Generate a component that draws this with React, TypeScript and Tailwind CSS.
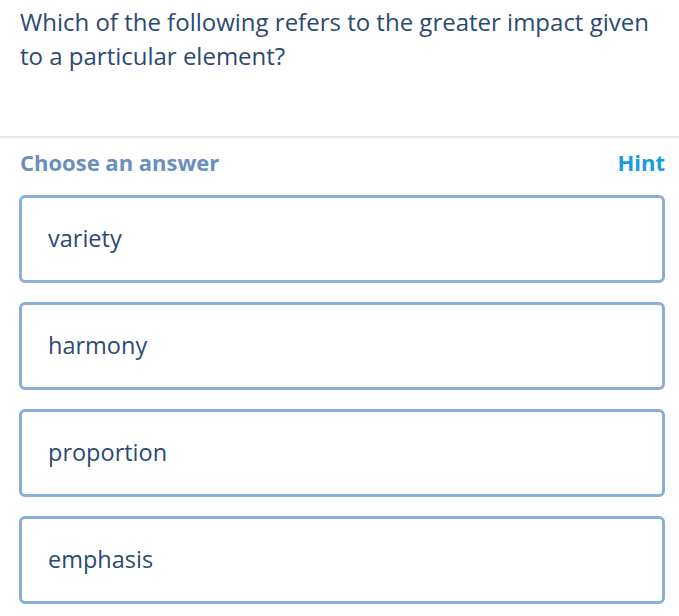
const answers = ['variety', 'harmony', 'proportion', 'emphasis']

export default function App() {
  return (
    <div className="min-h-[616px] w-[679px] bg-white [font-family:'Open_Sans',sans-serif]">
      <div className="h-[136px] pl-5 pr-[14px] pt-[5px]">
        <p className="text-[24px] leading-[34px] text-[#2b4a72]">
          Which of the following refers to the greater impact given to a particular element?
        </p>
      </div>
      <div className="h-[2px] bg-[#e4e4e4]" />
      <div className="pl-[19px] pr-[14px] pt-[11px]">
        <div className="flex items-center justify-between pl-px">
          <span className="text-[22px] font-bold leading-[26px] text-[#6a8fbd]">Choose an answer</span>
          <span className="text-[22px] font-bold leading-[26px] text-[#1a9be6]">Hint</span>
        </div>
        <div className="mt-[20px] flex flex-col gap-[19px]">
          {answers.map((answer) => (
            <button
              key={answer}
              className="flex h-[88px] w-full items-center rounded-[6px] border-[3px] border-[#8aaed8] bg-white pl-[26px] text-left text-[23.5px] text-[#2b4a72]"
            >
              {answer}
            </button>
          ))}
        </div>
      </div>
    </div>
  )
}
